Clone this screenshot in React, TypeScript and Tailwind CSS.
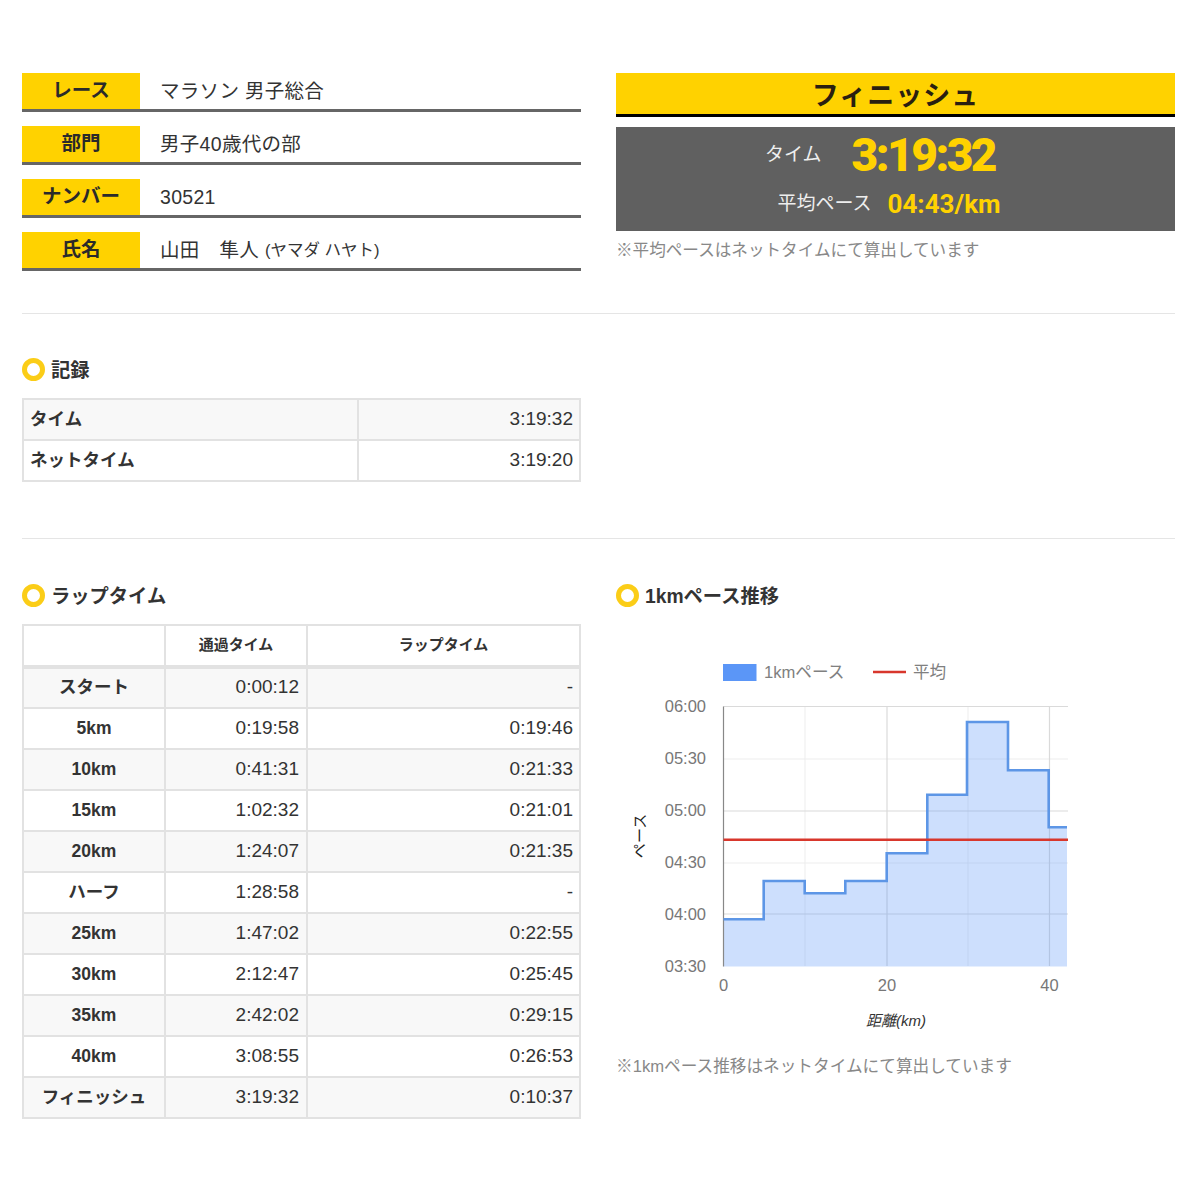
const font = "[font-family:'Liberation_Sans','Noto_Sans_CJK_JP',sans-serif]";

const infoRows = [
  { label: "レース", value: "マラソン 男子総合" },
  { label: "部門", value: "男子40歳代の部" },
  { label: "ナンバー", value: "30521" },
  { label: "氏名", value: "山田　隼人", kana: "(ヤマダ ハヤト)" },
];

const laps = [
  ["スタート", "0:00:12", "-"],
  ["5km", "0:19:58", "0:19:46"],
  ["10km", "0:41:31", "0:21:33"],
  ["15km", "1:02:32", "0:21:01"],
  ["20km", "1:24:07", "0:21:35"],
  ["ハーフ", "1:28:58", "-"],
  ["25km", "1:47:02", "0:22:55"],
  ["30km", "2:12:47", "0:25:45"],
  ["35km", "2:42:02", "0:29:15"],
  ["40km", "3:08:55", "0:26:53"],
  ["フィニッシュ", "3:19:32", "0:10:37"],
];

function Heading({ children }: { children: React.ReactNode }) {
  return (
    <div className="flex h-6 items-center gap-[6px]">
      <span className="-mt-[4px] h-[23px] w-[23px] rounded-full border-[5px] border-[#fbcd17] bg-white" />
      <span className="text-[19.3px] font-bold text-[#333]">{children}</span>
    </div>
  );
}

function PaceChart() {
  const yLabels = [
    ["06:00", 706.5],
    ["05:30", 758.5],
    ["05:00", 810.5],
    ["04:30", 862.5],
    ["04:00", 914],
    ["03:30", 966],
  ] as const;
  const line =
    "723.5,919.3 763.7,919.3 763.7,881 804.7,881 804.7,893.3 845.3,893.3 845.3,881 886.7,881 886.7,853.3 927.3,853.3 927.3,794.7 967,794.7 967,722 1008,722 1008,770.3 1048.7,770.3 1048.7,827.3 1067,827.3";
  return (
    <svg viewBox="616 640 474 400" width="474" height="400" className="mt-[30px] block">
      <g stroke="#ededed" strokeWidth="1">
        <line x1="723.5" x2="1068" y1="759" y2="759" />
        <line x1="723.5" x2="1068" y1="863" y2="863" />
        <line x1="805" x2="805" y1="706.5" y2="966" />
        <line x1="968" x2="968" y1="706.5" y2="966" />
      </g>
      <g stroke="#dadada" strokeWidth="1.2">
        <line x1="723.5" x2="1068" y1="706.5" y2="706.5" />
        <line x1="723.5" x2="1068" y1="811" y2="811" />
        <line x1="723.5" x2="1068" y1="914" y2="914" />
        <line x1="887" x2="887" y1="706.5" y2="966" />
        <line x1="1049.5" x2="1049.5" y1="706.5" y2="966" />
      </g>
      <polygon points={`${line} 1067,966.5 723.5,966.5`} fill="#5b96f7" fillOpacity="0.3" />
      <line x1="723.5" x2="723.5" y1="706.5" y2="966.5" stroke="#888" strokeWidth="1.2" />
      <polyline points={line} fill="none" stroke="#5d96e6" strokeWidth="2.6" />
      <line x1="723.5" x2="1068" y1="839.7" y2="839.7" stroke="#d8372c" strokeWidth="2.6" />

      <rect x="723" y="664" width="33.5" height="17" fill="#5b96f7" />
      <text x="764" y="677.5" fontSize="16.6" fill="#808080">1kmペース</text>
      <line x1="873" x2="906" y1="672" y2="672" stroke="#d8372c" strokeWidth="2.4" />
      <text x="913" y="677.5" fontSize="16.6" fill="#808080">平均</text>

      {yLabels.map(([label, y]) => (
        <text key={label} x="706" y={y + 5.5} textAnchor="end" fontSize="16.5" fill="#777">
          {label}
        </text>
      ))}
      {[
        ["0", 723.5],
        ["20", 887],
        ["40", 1049.5],
      ].map(([label, x]) => (
        <text key={label} x={x} y="991" textAnchor="middle" fontSize="16.5" fill="#777">
          {label}
        </text>
      ))}
      <text x="896" y="1026" textAnchor="middle" fontSize="15" fontStyle="italic" fill="#333">
        距離(km)
      </text>
      <text
        transform="translate(645 836) rotate(-90)"
        textAnchor="middle"
        fontSize="15"
        fill="#222"
      >
        ペース
      </text>
    </svg>
  );
}

export default function App() {
  return (
    <div className={`${font} min-h-[1200px] w-[1200px] bg-white px-[22px] pt-[73px] text-[#333]`}>
      <div className="grid w-[1153px] grid-cols-[559px_559px] gap-x-[35px]">
        <div className="flex flex-col gap-[14.5px]">
          {infoRows.map((row) => (
            <div key={row.label} className="flex h-[38.5px] items-stretch border-b-[3px] border-[#666]">
              <div className="flex w-[118px] items-center justify-center bg-[#ffd200] text-[19.5px] font-bold text-[#2a2a2a]">
                {row.label}
              </div>
              <div className="flex items-center pl-[20px] pt-[1px] text-[19.5px] tracking-[0.3px] text-[#333]">
                {row.value}
                {row.kana && <span className="ml-[6px] text-[16.5px] tracking-normal">{row.kana}</span>}
              </div>
            </div>
          ))}
        </div>

        <div>
          <div className="flex h-[44px] items-center justify-center border-b-[3px] border-black bg-[#ffd200] pt-[6px] text-[27px] font-bold tracking-[1px] text-[#2a1f10]">
            フィニッシュ
          </div>
          <div className="mt-[10px] flex h-[104px] flex-col bg-[#606060]">
            <div className="mt-[1px] flex h-[54px] items-center justify-center gap-[30px] pr-[31px]">
              <span className="text-[19px] text-[#eee]">タイム</span>
              <span className="font-['Roboto'] text-[46px] font-black tracking-[-2.5px] text-[#ffd200]">3:19:32</span>
            </div>
            <div className="mt-[3px] flex h-[38px] items-center justify-center gap-[16px] pr-[13px]">
              <span className="text-[19px] text-[#eee]">平均ペース</span>
              <span className="font-['Roboto'] text-[26px] font-bold text-[#ffd200]">04:43/km</span>
            </div>
          </div>
          <p className="mt-[10px] text-[16.6px] leading-[20px] text-[#888]">※平均ペースはネットタイムにて算出しています</p>
        </div>
      </div>

      <hr className="mt-[42px] w-[1153px] border-[#e5e5e5]" />

      <div className="mt-[46px] w-[559px]">
        <Heading>記録</Heading>
        <table className="mt-[14px] w-full table-fixed border-collapse text-[19px]">
          <colgroup>
            <col className="w-[335px]" />
            <col />
          </colgroup>
          <tbody>
            <tr className="h-[41px] bg-[#f8f8f8]">
              <td className="border-2 border-[#e2e2e2] pl-[6px] text-[17.5px] font-bold">タイム</td>
              <td className="border-2 border-[#e2e2e2] pr-[6px] pt-[1px] text-right">3:19:32</td>
            </tr>
            <tr className="h-[41px]">
              <td className="border-2 border-[#e2e2e2] pl-[6px] text-[17.5px] font-bold">ネットタイム</td>
              <td className="border-2 border-[#e2e2e2] pr-[6px] pt-[1px] text-right">3:19:20</td>
            </tr>
          </tbody>
        </table>
      </div>

      <hr className="mt-[56px] w-[1153px] border-[#e5e5e5]" />

      <div className="mt-[47px] grid w-[1153px] grid-cols-[559px_559px] gap-x-[35px]">
        <div>
          <Heading>ラップタイム</Heading>
          <table className="mt-[14px] w-full table-fixed border-collapse text-[19px]">
            <colgroup>
              <col className="w-[142px]" />
              <col className="w-[142px]" />
              <col />
            </colgroup>
            <thead>
              <tr className="h-[42px] text-[15px]">
                <th className="border-2 border-b-[4px] border-[#e2e2e2]" />
                <th className="border-2 border-b-[4px] border-[#e2e2e2] font-bold">通過タイム</th>
                <th className="border-2 border-b-[4px] border-[#e2e2e2] font-bold">ラップタイム</th>
              </tr>
            </thead>
            <tbody>
              {laps.map(([name, split, lap], i) => (
                <tr key={name} className={i % 2 === 0 ? "h-[41px] bg-[#f8f8f8]" : "h-[41px]"}>
                  <td className="border-2 border-[#e2e2e2] text-center text-[17.5px] font-bold">{name}</td>
                  <td className="border-2 border-[#e2e2e2] pr-[7px] text-right">{split}</td>
                  <td className="border-2 border-[#e2e2e2] pr-[6px] text-right">{lap}</td>
                </tr>
              ))}
            </tbody>
          </table>
        </div>

        <div>
          <Heading>1kmペース推移</Heading>
          <PaceChart />
          <p className="mt-[17px] text-[16.65px] leading-[20px] text-[#888]">※1kmペース推移はネットタイムにて算出しています</p>
        </div>
      </div>
    </div>
  );
}
